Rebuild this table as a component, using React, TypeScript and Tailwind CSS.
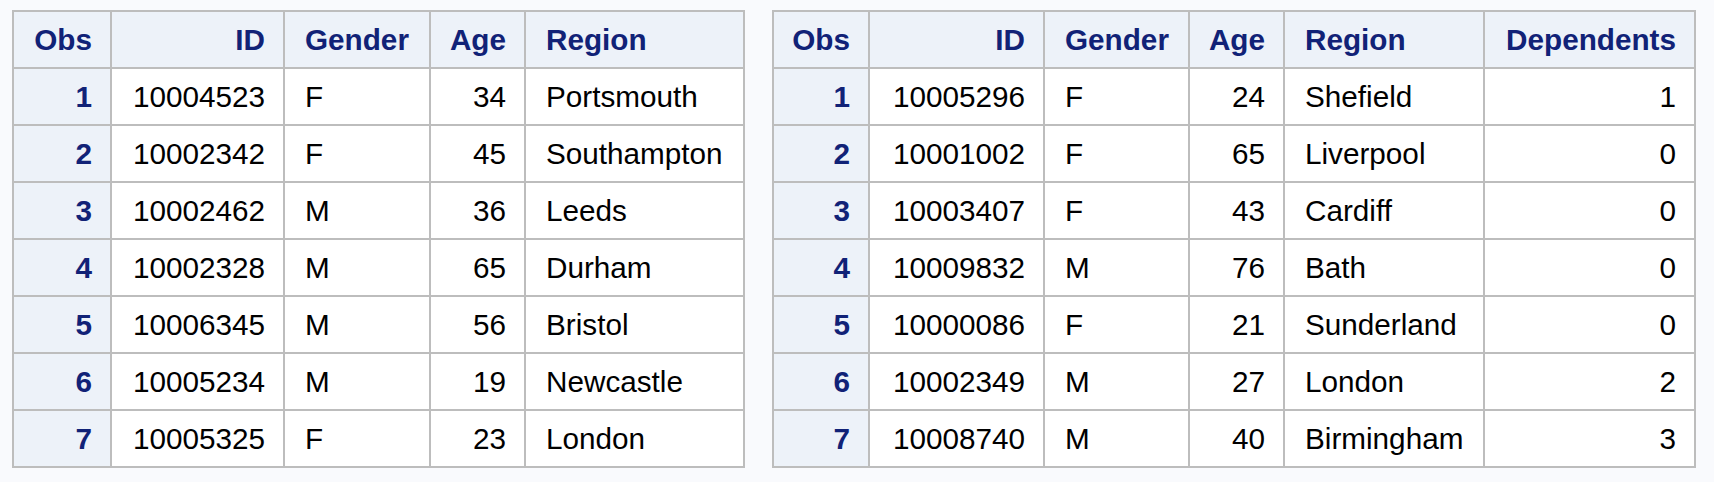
import React from 'react';

type Col = { key: string; label: string; align: 'left' | 'right' };

const leftCols: Col[] = [
    { key: 'obs', label: 'Obs', align: 'right' },
    { key: 'id', label: 'ID', align: 'right' },
    { key: 'gender', label: 'Gender', align: 'left' },
    { key: 'age', label: 'Age', align: 'right' },
    { key: 'region', label: 'Region', align: 'left' },
];

const rightCols: Col[] = [...leftCols, { key: 'dep', label: 'Dependents', align: 'right' }];

const leftRows = [
    ['1', '10004523', 'F', '34', 'Portsmouth'],
    ['2', '10002342', 'F', '45', 'Southampton'],
    ['3', '10002462', 'M', '36', 'Leeds'],
    ['4', '10002328', 'M', '65', 'Durham'],
    ['5', '10006345', 'M', '56', 'Bristol'],
    ['6', '10005234', 'M', '19', 'Newcastle'],
    ['7', '10005325', 'F', '23', 'London'],
];

const rightRows = [
    ['1', '10005296', 'F', '24', 'Shefield', '1'],
    ['2', '10001002', 'F', '65', 'Liverpool', '0'],
    ['3', '10003407', 'F', '43', 'Cardiff', '0'],
    ['4', '10009832', 'M', '76', 'Bath', '0'],
    ['5', '10000086', 'F', '21', 'Sunderland', '0'],
    ['6', '10002349', 'M', '27', 'London', '2'],
    ['7', '10008740', 'M', '40', 'Birmingham', '3'],
];

// header + row-header cells share the pale blue, data cells are white
const Cell = ({ text, align, head }: { text: string; align: 'left' | 'right'; head: boolean }) => (
    <div
        className={`h-[55px] flex items-center ${align === 'right' ? 'justify-end pr-[18px] pl-[10px]' : 'justify-start pl-[20px] pr-[10px]'} ${
            head ? 'bg-[#edf2f9] text-[#112277] font-bold' : 'bg-white text-black'
        }`}
    >
        {text}
    </div>
);

const DataTable = ({ cols, rows, grid }: { cols: Col[]; rows: string[][]; grid: string }) => (
    <div className={`grid ${grid} gap-[2px] p-[2px] bg-[#bdbdbd]`}>
        {cols.map(c => (
            <Cell key={c.key} text={c.label} align={c.align} head />
        ))}
        {rows.map(r =>
            r.map((v, i) => <Cell key={`${r[0]}-${i}`} text={v} align={cols[i].align} head={i === 0} />)
        )}
    </div>
);

export default function App() {
    return (
        <div
            className="w-[1714px] h-[482px] bg-[#f9fafd] pl-[12px] pt-[10px] flex items-start gap-[27px] text-[29.7px] leading-none"
            style={{ fontFamily: '"Liberation Sans", Arial, sans-serif' }}
        >
            <DataTable cols={leftCols} rows={leftRows} grid="grid-cols-[96px_171px_144px_93px_217px]" />
            <DataTable cols={rightCols} rows={rightRows} grid="grid-cols-[94px_173px_143px_93px_198px_209px]" />
        </div>
    );
}
